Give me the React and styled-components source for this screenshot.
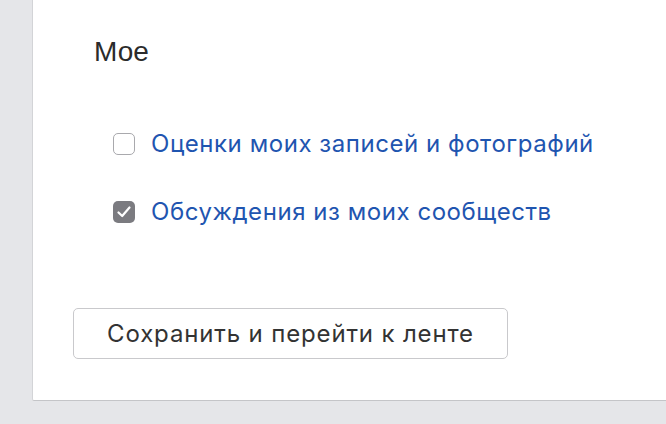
import React, { useState } from 'react'
import styled, { createGlobalStyle } from 'styled-components'

const GlobalStyle = createGlobalStyle`
  html, body {
    margin: 0;
    padding: 0;
    background: #e5e6e9;
    font-family: 'Liberation Sans', Arial, sans-serif;
  }
`

const Page = styled.div`
  height: 424px;
  overflow: hidden;
  padding-left: 32px;
`

const Card = styled.section`
  background: #fff;
  border-left: 1px solid #d3d4d7;
  border-bottom: 1px solid #c4c5c8;
  border-bottom-left-radius: 2px;
  height: 401px;
  box-sizing: border-box;
  padding: 36px 0 0 40px;
`

const Title = styled.h2`
  margin: 0;
  padding-left: 21px;
  font-weight: normal;
  font-size: 28px;
  line-height: 32px;
  color: #2b2b2b;
`

const Options = styled.div`
  display: flex;
  flex-direction: column;
  gap: 46px;
  margin-top: 65px;
  padding-left: 40px;
`

const Option = styled.label`
  display: flex;
  align-items: center;
  gap: 16px;
  cursor: pointer;
  font-family: Inter, 'Liberation Sans', sans-serif;
  font-size: 24px;
  line-height: 22px;
  letter-spacing: 0.55px;
  color: #1f55b0;
`

const Box = styled.span`
  width: 22px;
  height: 22px;
  box-sizing: border-box;
  border-radius: 5px;
  display: flex;
  align-items: center;
  justify-content: center;
  flex-shrink: 0;
  border: ${(p) => (p.$checked ? 'none' : '1.5px solid #a9a9ad')};
  background: ${(p) => (p.$checked ? '#7b7b80' : '#fff')};
`

const SaveButton = styled.button`
  margin-top: 85px;
  width: 435px;
  height: 51px;
  border: 1.5px solid #c9c9cc;
  border-radius: 5px;
  background: #fff;
  font-family: Inter, 'Liberation Sans', sans-serif;
  font-size: 24px;
  letter-spacing: 0.85px;
  color: #333;
  cursor: pointer;
`

const Check = () => (
  <svg width="14" height="12" viewBox="0 0 14 12">
    <path
      d="M1.5 6.5 L5.2 10 L12.5 1.5"
      fill="none"
      stroke="#fff"
      strokeWidth="2.2"
      strokeLinecap="round"
      strokeLinejoin="round"
    />
  </svg>
)

const options = [
  { id: 'likes', label: 'Оценки моих записей и фотографий', checked: false },
  { id: 'groups', label: 'Обсуждения из моих сообществ', checked: true },
]

export default function App() {
  const [values, setValues] = useState(
    Object.fromEntries(options.map((o) => [o.id, o.checked]))
  )

  return (
    <Page>
      <GlobalStyle />
      <Card>
        <Title>Мое</Title>
        <Options>
          {options.map((o) => (
            <Option
              key={o.id}
              onClick={() => setValues((v) => ({ ...v, [o.id]: !v[o.id] }))}
            >
              <Box $checked={values[o.id]}>{values[o.id] && <Check />}</Box>
              {o.label}
            </Option>
          ))}
        </Options>
        <SaveButton>Сохранить и перейти к ленте</SaveButton>
      </Card>
    </Page>
  )
}
